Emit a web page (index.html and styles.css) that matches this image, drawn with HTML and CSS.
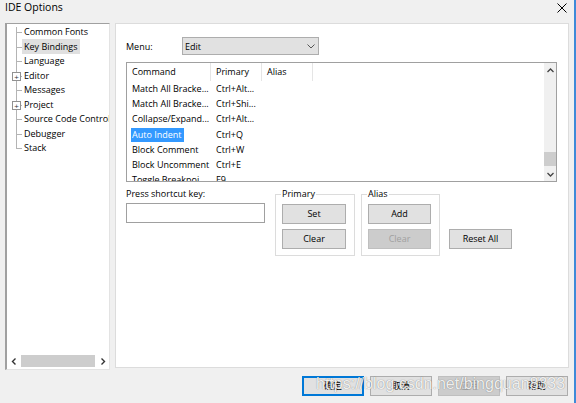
FILE: index.html
```html
<!DOCTYPE html>
<html>
<head>
<meta charset="utf-8">
<link rel="stylesheet" href="styles.css">
</head>
<body>
<div class="window">
  <div class="titlebar">
    <span class="title">IDE Options</span>
    <svg class="close" width="10" height="10" viewBox="0 0 10 10"><path d="M0.5 0.5L9.5 9.5M9.5 0.5L0.5 9.5" stroke="#000" stroke-width="1"/></svg>
  </div>
  <div class="main">
    <div class="tree">
      <ul class="tree-list">
        <li>Common Fonts</li>
        <li><span class="sel">Key Bindings</span></li>
        <li>Language</li>
        <li><span class="expander">+</span>Editor</li>
        <li>Messages</li>
        <li><span class="expander">+</span>Project</li>
        <li>Source Code Control</li>
        <li>Debugger</li>
        <li>Stack</li>
      </ul>
      <div class="hscroll">
        <svg class="arrow" width="6" height="7" viewBox="0 0 6 7"><path d="M4.5 0.5L1.5 3.5L4.5 6.5" fill="none" stroke="#333" stroke-width="1.4"/></svg>
        <div class="htrack"><div class="hthumb"></div></div>
        <svg class="arrow" width="6" height="7" viewBox="0 0 6 7"><path d="M1.5 0.5L4.5 3.5L1.5 6.5" fill="none" stroke="#333" stroke-width="1.4"/></svg>
      </div>
    </div>
    <div class="panel">
      <div class="menu-row">
        <span class="menu-label">Menu:</span>
        <div class="select">
          <span>Edit</span>
          <svg width="8" height="5" viewBox="0 0 8 5"><path d="M0.5 0.5L4 4L7.5 0.5" fill="none" stroke="#555" stroke-width="1"/></svg>
        </div>
      </div>
      <div class="list">
        <div class="list-body">
          <div class="row header">
            <span class="col c1">Command</span>
            <span class="col c2">Primary</span>
            <span class="col c3">Alias</span>
          </div>
          <div class="row"><span class="col c1">Match All Bracke...</span><span class="col c2">Ctrl+Alt...</span></div>
          <div class="row"><span class="col c1">Match All Bracke...</span><span class="col c2">Ctrl+Shi...</span></div>
          <div class="row"><span class="col c1">Collapse/Expand...</span><span class="col c2">Ctrl+Alt...</span></div>
          <div class="row"><span class="col c1"><span class="hl">Auto Indent</span></span><span class="col c2">Ctrl+Q</span></div>
          <div class="row"><span class="col c1">Block Comment</span><span class="col c2">Ctrl+W</span></div>
          <div class="row"><span class="col c1">Block Uncomment</span><span class="col c2">Ctrl+E</span></div>
          <div class="row"><span class="col c1">Toggle Breakpoi...</span><span class="col c2">F9</span></div>
        </div>
        <div class="vscroll">
          <svg width="7" height="5" viewBox="0 0 7 5"><path d="M0.5 4L3.5 1L6.5 4" fill="none" stroke="#444" stroke-width="1.3"/></svg>
          <div class="vtrack"><div class="vthumb"></div></div>
          <svg width="7" height="5" viewBox="0 0 7 5"><path d="M0.5 1L3.5 4L6.5 1" fill="none" stroke="#444" stroke-width="1.3"/></svg>
        </div>
      </div>
      <div class="lower">
        <div class="shortcut">
          <div class="shortcut-label">Press shortcut key:</div>
          <div class="input"></div>
        </div>
        <fieldset class="group primary">
          <legend>Primary</legend>
          <button class="btn">Set</button>
          <button class="btn">Clear</button>
        </fieldset>
        <fieldset class="group alias">
          <legend>Alias</legend>
          <button class="btn">Add</button>
          <button class="btn" disabled>Clear</button>
        </fieldset>
        <button class="btn reset">Reset All</button>
      </div>
    </div>
  </div>
  <div class="footer">
    <button class="btn fbtn default">确定</button>
    <button class="btn fbtn">取消</button>
    <button class="btn fbtn" disabled>应用</button>
    <button class="btn fbtn">帮助</button>
  </div>
  <div class="watermark">https://blog.csdn.net/bingquan8333</div>
</div>
</body>
</html>
```
FILE: styles.css
```css
* { box-sizing: border-box; }
html, body { margin: 0; padding: 0; }
body {
  width: 576px;
  height: 403px;
  overflow: hidden;
  font-family: "Open Sans", "Noto Sans CJK SC", sans-serif;
  font-size: 9px;
  color: #000;
}
.window {
  position: relative;
  width: 576px;
  height: 403px;
  background: #f0f0f0;
  border-right: 2px solid #3e8ad8;
}
.titlebar {
  height: 23px;
  display: flex;
  align-items: flex-start;
  justify-content: space-between;
  padding: 0 7px 0 5px;
}
.title { line-height: 14px; font-size: 10.5px; }
.close { margin-top: 3px; }

.main {
  display: flex;
  align-items: flex-start;
  padding-left: 5px;
  gap: 5px;
}

/* tree */
.tree {
  width: 105px;
  height: 347px;
  background: #fff;
  border-top: 1px solid #a0a0a0;
  border-left: 2px solid #a0a0a0;
  border-right: 1px solid #e3e3e3;
  border-bottom: 1px solid #e3e3e3;
  display: flex;
  flex-direction: column;
  overflow: hidden;
}
.tree-list {
  position: relative;
  list-style: none;
  margin: 0;
  padding: 1px 0 0 0;
  flex: 1;
  white-space: nowrap;
}
.tree-list::before {
  content: "";
  position: absolute;
  left: 9px;
  top: 3px;
  height: 122px;
  border-left: 1px solid #b4b4b4;
}
.tree-list li {
  position: relative;
  line-height: 14.5px;
  height: 14.5px;
  padding-left: 17px;
}
.tree-list li::before {
  content: "";
  position: absolute;
  left: 10px;
  top: 7px;
  width: 5px;
  border-top: 1px solid #b4b4b4;
}
.sel {
  background: #e0e0e0;
  margin-left: -2px;
  padding: 1px 2px;
}
.expander {
  position: absolute;
  left: 5px;
  top: 3px;
  width: 9px;
  height: 9px;
  border: 1px solid #919191;
  background: #fff;
  font-size: 8px;
  line-height: 7px;
  text-align: center;
  color: #333;
  z-index: 1;
}
.hscroll {
  height: 12px;
  margin-bottom: 2px;
  display: flex;
  align-items: center;
  padding: 0 3px 0 4px;
  gap: 4px;
  background: #fff;
}
.htrack { flex: 1; height: 12px; }
.hthumb { width: 74px; height: 12px; background: #cdcdcd; }

/* panel */
.panel {
  width: 454px;
  height: 345px;
  background: #fff;
  border: 1px solid #dcdcdc;
  padding: 13px 0 0 10px;
}
.menu-row {
  display: flex;
  align-items: center;
  height: 18px;
}
.menu-label { width: 56px; }
.select {
  width: 137px;
  height: 18px;
  background: #e1e1e1;
  border: 1px solid #adadad;
  display: flex;
  align-items: center;
  justify-content: space-between;
  padding: 0 3px 0 2px;
}

.list {
  margin-top: 7px;
  width: 431px;
  height: 120px;
  border: 1px solid #a0a0a0;
  display: flex;
  background: #fff;
}
.list-body {
  flex: 1;
  overflow: hidden;
}
.row {
  display: flex;
  height: 15.2px;
  line-height: 15.2px;
  white-space: nowrap;
}
.row.header {
  height: 18px;
  line-height: 18px;
}
.col { padding-left: 5px; overflow: hidden; }
.c1 { width: 84px; }
.c2 { width: 51px; }
.c3 { width: 51px; }
.header .col { border-right: 1px solid #e5e5e5; }
.hl {
  display: inline-block;
  background: #3399ff;
  color: #fff;
  line-height: 14.5px;
  margin-left: -1px;
  padding: 0 2px 0 1px;
}
.vscroll {
  width: 12px;
  background: #f0f0f0;
  display: flex;
  flex-direction: column;
  align-items: center;
  padding: 5px 0 4px;
}
.vtrack {
  flex: 1;
  width: 100%;
  position: relative;
}
.vthumb {
  position: absolute;
  left: 0;
  right: 0;
  top: 79px;
  height: 14px;
  background: #cdcdcd;
}

/* lower */
.lower {
  display: flex;
  align-items: flex-start;
  margin-top: 5px;
}
.shortcut-label { line-height: 14px; }
.input {
  margin-top: 2px;
  width: 139px;
  height: 20px;
  border: 1px solid #a0a0a0;
  background: #fff;
}
.group {
  margin: 0;
  border: 1px solid #dcdcdc;
  padding: 3px 6px 6px 6px;
  display: flex;
  flex-direction: column;
  gap: 5px;
  min-width: 0;
}
.group legend {
  padding: 0 1px;
  margin-left: -1px;
  line-height: 14px;
}
.primary { width: 80px; margin-left: 10px; }
.alias { width: 79px; margin-left: 6px; }
.btn {
  font-family: inherit;
  font-size: 9px;
  height: 20px;
  padding: 0;
  background: #e1e1e1;
  border: 1px solid #adadad;
  color: #000;
  line-height: 18px;
}
.btn:disabled {
  background: #cccccc;
  border-color: #bfbfbf;
  color: #a0a0a0;
}
.group .btn { width: 64px; }
.alias .btn { width: 63px; }
.reset {
  width: 63px;
  margin-top: 42px;
  margin-left: 9px;
}

/* footer */
.footer {
  display: flex;
  justify-content: flex-end;
  gap: 6px;
  padding-right: 6px;
  margin-top: 6px;
}
.fbtn {
  width: 62px;
  height: 20px;
  font-family: "Noto Sans CJK SC", sans-serif;
  font-size: 9px;
}
.fbtn.default { border-color: #0078d7; box-shadow: inset 0 0 0 1px #0078d7; }

.watermark {
  position: absolute;
  left: 316px;
  top: 375px;
  font-family: "Liberation Sans", sans-serif;
  font-size: 16px;
  line-height: 18px;
  color: rgba(255, 255, 255, 0.9);
  text-shadow: 0 0 1px rgba(0, 0, 0, 0.5);
  white-space: nowrap;
}
```
